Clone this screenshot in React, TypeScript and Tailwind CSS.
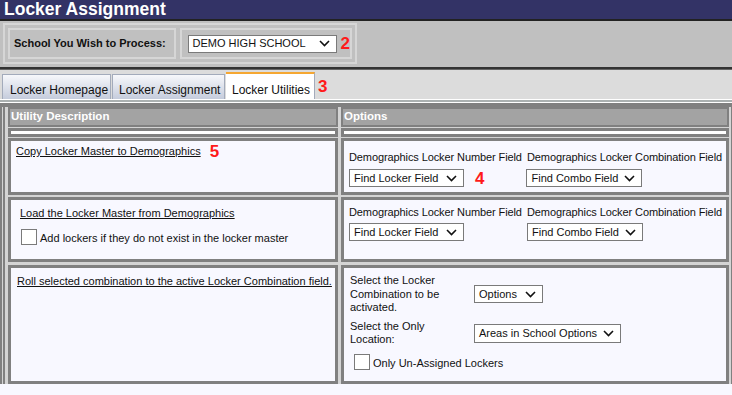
import React from 'react';

const FONT = { fontFamily: '"Liberation Sans", Arial, sans-serif' };

function Chevron() {
  return (
    <svg width="11" height="7" viewBox="0 0 11 7" className="shrink-0">
      <polyline points="1,1 5.5,5.5 10,1" fill="none" stroke="#111" strokeWidth="1.6" />
    </svg>
  );
}

function FakeSelect({ label, w, cls = '' }: { label: string; w: string; cls?: string }) {
  return (
    <div
      className={`flex h-[18px] items-center justify-between border border-[#7a7a7a] bg-white pl-[4px] pr-[6px] text-[11px] text-[#111] ${w} ${cls}`}
    >
      <span className="whitespace-nowrap">{label}</span>
      <Chevron />
    </div>
  );
}

function Check() {
  return <div className="h-[16px] w-[16px] shrink-0 border border-[#7a7a7a] bg-white" />;
}

function Red({ n, cls = '' }: { n: string; cls?: string }) {
  return <span className={`text-[17px] font-bold leading-none text-[#ff1a1a] ${cls}`}>{n}</span>;
}

function FieldPair() {
  return (
    <div className="grid grid-cols-[178px_auto] tracking-[-0.1px]">
      <span className="whitespace-nowrap leading-[14px]">Demographics Locker Number Field</span>
      <span className="whitespace-nowrap leading-[14px]">Demographics Locker Combination Field</span>
    </div>
  );
}

export default function App() {
  return (
    <div style={FONT} className="h-[395px] w-[732px] overflow-hidden bg-[#f8f8ff] text-[11px] text-[#111]">
      {/* title */}
      <div className="h-[19px] bg-[#333366] pl-[4px] text-[17.5px] font-bold leading-[19px] text-white">
        Locker Assignment
      </div>
      <div className="h-[2px] bg-[#222]" />

      {/* school bar */}
      <div className="h-[46px] bg-[#c0c0c0] pl-[3px] pt-[2px]">
        <div className="flex h-[41px] w-[354px] gap-[4px] border-2 border-[#d6d6d6] p-[3px]">
          <div className="flex w-[169px] items-center border-2 border-[#d6d6d6] pl-[4px] text-[11px] font-bold">
            School You Wish to Process:
          </div>
          <div className="flex flex-1 items-center gap-[4px] border-2 border-[#d6d6d6] pl-[6px]">
            <FakeSelect label="DEMO HIGH SCHOOL" w="w-[149px]" cls="h-[16px] text-[10.5px]" />
            <Red n="2" />
          </div>
        </div>
      </div>
      <div className="h-[2px] bg-[#333]" />
      <div className="h-[1px] bg-[#666]" />

      {/* tabs */}
      <div className="flex h-[29px] items-end bg-[#dcdcdc] pl-[2px]">
        <div className="flex h-[25px] w-[109px] items-center border border-b-0 border-[#a3abbb] bg-gradient-to-b from-[#f7f8fb] to-[#c5ccdc] pl-[7px] pt-[5px] text-[12px]">
          Locker Homepage
        </div>
        <div className="ml-[1px] flex h-[25px] w-[113px] items-center border border-b-0 border-[#a3abbb] bg-gradient-to-b from-[#f7f8fb] to-[#c5ccdc] pl-[6px] pt-[5px] text-[12px]">
          Locker Assignment
        </div>
        <div className="ml-[1px] flex h-[27px] w-[89px] items-center border-t-[2px] border-r border-t-[#f5a732] border-r-[#a3abbb] bg-white pl-[6px] pt-[7px] text-[12px]">
          Locker Utilities
        </div>
        <Red n="3" cls="mb-[4px] ml-[3px]" />
      </div>
      <div className="h-[1px] bg-white" />
      <div className="h-[2px] bg-[#aab0b0]" />
      <div className="h-[1px] bg-white" />

      {/* content */}
      <div className="border-l-2 border-r border-t-[4px] border-[#808080] bg-[#d4d4d4]">
        <div className="ml-[1px] border-l-2 border-[#808080] pl-[3px] pr-[2px]">
          <div className="grid grid-cols-[330px_388px] gap-x-[3px] bg-[#d4d4d4]">
            <div className="flex h-[20px] items-center border-2 border-[#808080] bg-[#a3a3a3] pl-[1px] text-[11.5px] font-bold text-white">
              Utility Description
            </div>
            <div className="flex h-[20px] items-center border-2 border-[#808080] bg-[#a3a3a3] pl-[1px] text-[11.5px] font-bold text-white">
              Options
            </div>
          </div>
          <div className="mt-[1px] grid grid-cols-[330px_388px] gap-x-[3px]">
            <div className="h-[9px] border-[3px] border-[#808080] bg-white" />
            <div className="h-[9px] border-[3px] border-[#808080] bg-white" />
          </div>

          {/* row 1 */}
          <div className="mt-[1px] grid grid-cols-[330px_388px] gap-x-[3px]">
            <div className="h-[57px] border-[3px] border-[#808080] bg-[#f8f8ff] pl-[5px] pt-[2px]">
              <span className="underline">Copy Locker Master to Demographics</span>
              <Red n="5" cls="ml-[9px] align-[-2px]" />
            </div>
            <div className="h-[57px] border-[3px] border-[#808080] bg-[#f8f8ff] pl-[5px] pt-[9px]">
              <FieldPair />
              <div className="mt-[5px] flex items-center">
                <FakeSelect label="Find Locker Field" w="w-[115px]" />
                <Red n="4" cls="ml-[11px]" />
                <FakeSelect label="Find Combo Field" w="w-[116px]" cls="ml-[42px]" />
              </div>
            </div>
          </div>

          {/* row 2 */}
          <div className="mt-[2px] grid grid-cols-[330px_388px] gap-x-[3px]">
            <div className="h-[65px] border-[3px] border-[#808080] bg-[#f8f8ff] pl-[9px] pt-[5px]">
              <span className="underline">Load the Locker Master from Demographics</span>
              <div className="mt-[7px] flex items-end gap-[3px] pl-[1px]">
                <Check />
                <span className="leading-[13px]">Add lockers if they do not exist in the locker master</span>
              </div>
            </div>
            <div className="h-[65px] border-[3px] border-[#808080] bg-[#f8f8ff] pl-[5px] pt-[5px]">
              <FieldPair />
              <div className="mt-[4px] flex items-center">
                <FakeSelect label="Find Locker Field" w="w-[115px]" />
                <FakeSelect label="Find Combo Field" w="w-[116px]" cls="ml-[63px]" />
              </div>
            </div>
          </div>

          {/* row 3 */}
          <div className="mt-[3px] grid grid-cols-[330px_388px] gap-x-[3px]">
            <div className="h-[119px] border-[3px] border-[#808080] bg-[#f8f8ff] pl-[6px] pt-[5px]">
              <span className="underline">Roll selected combination to the active Locker Combination field.</span>
            </div>
            <div className="h-[119px] border-[3px] border-[#808080] bg-[#f8f8ff] pl-[6px] pt-[6px]">
              <div className="grid grid-cols-[124px_auto] items-center gap-y-[5px]">
                <span className="w-[110px] leading-[13.5px]">Select the Locker Combination to be activated.</span>
                <FakeSelect label="Options" w="w-[69px]" />
                <span className="w-[110px] leading-[13.5px]">Select the Only Location:</span>
                <FakeSelect label="Areas in School Options" w="w-[147px]" cls="h-[19px]" />
              </div>
              <div className="mt-[7px] flex items-end gap-[3px] pl-[4px]">
                <Check />
                <span className="leading-[13px]">Only Un-Assigned Lockers</span>
              </div>
            </div>
          </div>
        </div>
      </div>
    </div>
  );
}
